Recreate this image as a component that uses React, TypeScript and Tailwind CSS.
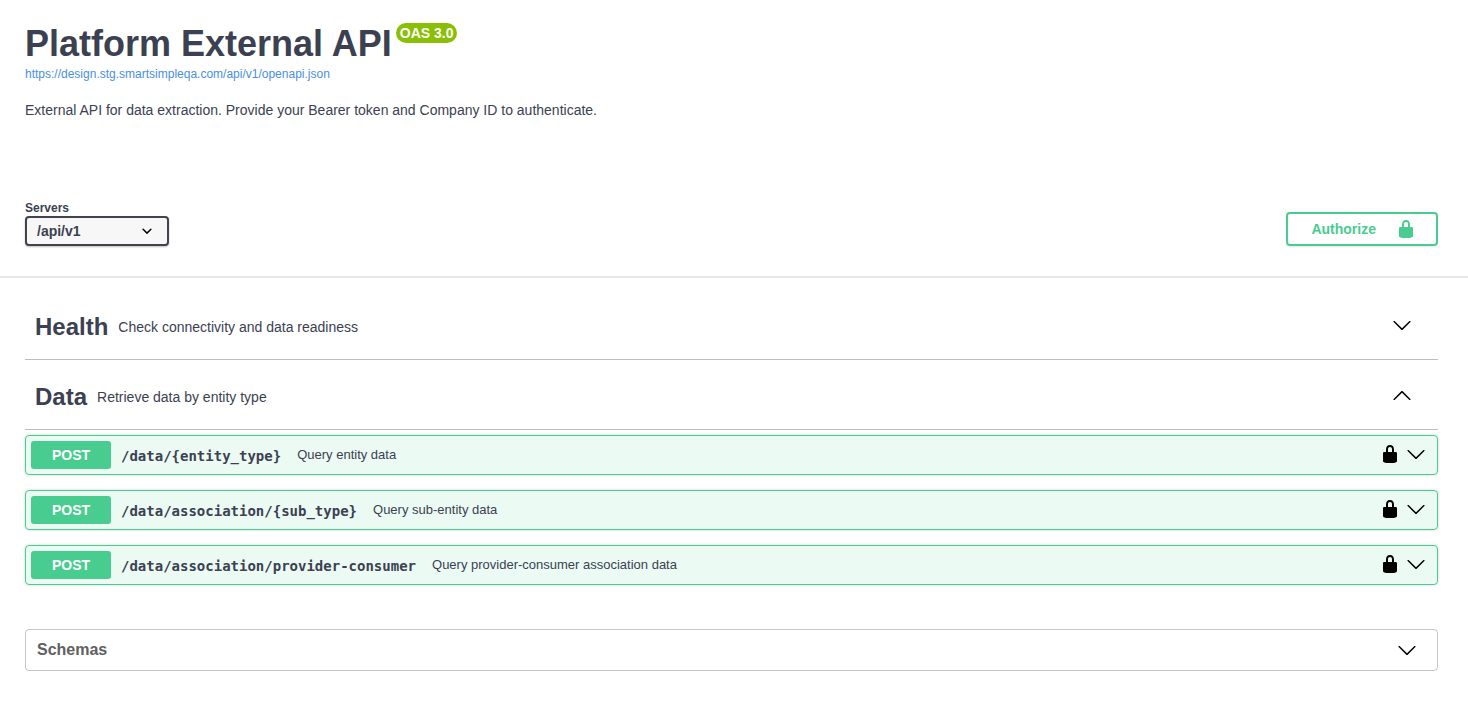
import type { ReactNode } from "react";

const operations = [
  { path: "/data/{entity_type}", summary: "Query entity data" },
  { path: "/data/association/{sub_type}", summary: "Query sub-entity data" },
  { path: "/data/association/provider-consumer", summary: "Query provider-consumer association data" },
];

function ArrowDown() {
  return (
    <svg viewBox="0 0 20 20" className="size-5 shrink-0" fill="currentColor" aria-hidden="true">
      <path d="M17.418 6.109c.272-.268.709-.268.979 0s.271.701 0 .969l-7.908 7.83c-.27.268-.707.268-.979 0l-7.908-7.83c-.27-.268-.27-.701 0-.969.271-.268.709-.268.979 0L10 13.25l7.418-7.141z" />
    </svg>
  );
}

function ArrowUp() {
  return (
    <svg viewBox="0 0 20 20" className="size-5 shrink-0" fill="currentColor" aria-hidden="true">
      <path d="M17.418 14.908c.272.268.709.268.979 0s.271-.701 0-.969l-7.908-7.83c-.27-.268-.707-.268-.979 0l-7.908 7.83c-.27.268-.27.701 0 .969.271.268.708.268.979 0L10 7.767l7.418 7.141z" />
    </svg>
  );
}

function Lock() {
  return (
    <svg viewBox="0 0 20 20" className="size-5 shrink-0" fill="currentColor" aria-hidden="true">
      <path d="M15.8 8H14V5.6C14 2.703 12.665 1 10 1 7.334 1 6 2.703 6 5.6V8H4c-.553 0-1 .646-1 1.199V17c0 .549.428 1.139.951 1.307l1.197.387C5.672 18.861 6.55 19 7.1 19h5.8c.549 0 1.428-.139 1.951-.307l1.196-.387c.524-.167.953-.757.953-1.306V9.199C17 8.646 16.352 8 15.8 8zM12 8H8V5.199C8 3.754 8.797 3 10 3c1.203 0 2 .754 2 2.199V8z" />
    </svg>
  );
}

function TagHeader({ name, description, open }: { name: string; description: string; open?: boolean }) {
  return (
    <h2 className="flex h-[70px] items-center border-b border-[#3b4151]/35 pl-[10px] pr-[26px]">
      <span className="pt-1 text-2xl font-bold">{name}</span>
      <small className="flex-1 px-[10px] pt-1 text-sm font-normal">{description}</small>
      <button
        type="button"
        aria-expanded={!!open}
        aria-label={open ? "Collapse operation" : "Expand operation"}
        className="text-black"
      >
        {open ? <ArrowUp /> : <ArrowDown />}
      </button>
    </h2>
  );
}

function Operation({ path, summary }: { path: string; summary: string }) {
  return (
    <div className="flex h-10 items-center rounded border border-[#49cc90] bg-[#49cc90]/10 pl-[5px] pr-[11px] shadow-[0_0_3px_rgba(0,0,0,0.19)]">
      <button type="button" className="flex flex-1 items-center text-left">
        <span className="w-20 rounded-[3px] bg-[#49cc90] py-1 text-center text-sm font-bold text-white">
          POST
        </span>
        <span className="pl-[10px] pr-4 pt-[2px] font-['DejaVu_Sans_Mono',monospace] text-sm font-bold">{path}</span>
        <span className="text-[13px]">{summary}</span>
      </button>
      <button type="button" aria-label="Authorization button unlocked" className="mr-[6px] pb-[3px] text-black">
        <Lock />
      </button>
      <button type="button" aria-label="Expand operation" className="pb-[3px] text-black">
        <ArrowDown />
      </button>
    </div>
  );
}

function Wrapper({ children }: { children: ReactNode }) {
  return <div className="pl-[25px] pr-[30px]">{children}</div>;
}

export default function App() {
  return (
    <div className="bg-white pb-8 font-['Liberation_Sans',Arial,sans-serif] text-[#3b4151]">
      <Wrapper>
        {/* Info */}
        <header className="pt-6">
          <div className="flex items-start gap-1">
            <h1 className="text-4xl font-bold">Platform External API</h1>
            <span className="-mt-px rounded-full bg-[#89bf04] px-1 text-sm font-bold text-white">OAS 3.0</span>
          </div>
          <a href="https://design.stg.smartsimpleqa.com/api/v1/openapi.json" className="block text-xs leading-5 text-[#4990e2]">
            https://design.stg.smartsimpleqa.com/api/v1/openapi.json
          </a>
          <p className="mt-4 text-sm">
            External API for data extraction. Provide your Bearer token and Company ID to authenticate.
          </p>
        </header>
      </Wrapper>

      {/* Servers and authorization */}
      <section className="mt-20 border-b-2 border-[#e8e8e8] pb-[30px]">
        <Wrapper>
          <div className="flex items-end justify-between">
            <div>
              <label htmlFor="servers" className="block text-xs font-bold">
                Servers
              </label>
              <div className="relative w-36">
                <select
                  id="servers"
                  className="h-[30px] w-full appearance-none rounded border-2 border-[#41444e] bg-[#f7f7f7] px-[10px] text-sm font-bold shadow-[0_1px_2px_rgba(0,0,0,0.25)]"
                >
                  <option>/api/v1</option>
                </select>
                <svg viewBox="0 0 20 20" className="pointer-events-none absolute top-[5px] right-3 size-5 text-black" fill="currentColor" aria-hidden="true">
                  <path d="M13.418 7.859a.695.695 0 01.978 0 .68.68 0 010 .969l-3.908 3.83a.697.697 0 01-.979 0l-3.908-3.83a.68.68 0 010-.969.695.695 0 01.978 0L10 11l3.418-3.141z" />
                </svg>
              </div>
            </div>
            <button
              type="button"
              className="flex h-[34px] items-center gap-5 rounded border-2 border-[#49cc90] pl-[23px] pr-5 text-sm font-bold text-[#49cc90] shadow-[0_1px_2px_rgba(0,0,0,0.1)]"
            >
              Authorize
              <Lock />
            </button>
          </div>
        </Wrapper>
      </section>

      {/* Operations */}
      <Wrapper>
        <main className="pt-3">
          <TagHeader name="Health" description="Check connectivity and data readiness" />
          <TagHeader name="Data" description="Retrieve data by entity type" open />
          <div className="mt-[5px] flex flex-col gap-[15px]">
            {operations.map((op) => (
              <Operation key={op.path} path={op.path} summary={op.summary} />
            ))}
          </div>

          <section className="mt-11 rounded border border-[#3b4151]/30">
            <h2>
              <button type="button" className="flex h-10 w-full items-center justify-between pl-[11px] pr-5 font-bold text-[#606060]">
                Schemas
                <span className="text-black">
                  <ArrowDown />
                </span>
              </button>
            </h2>
          </section>
        </main>
      </Wrapper>
    </div>
  );
}
